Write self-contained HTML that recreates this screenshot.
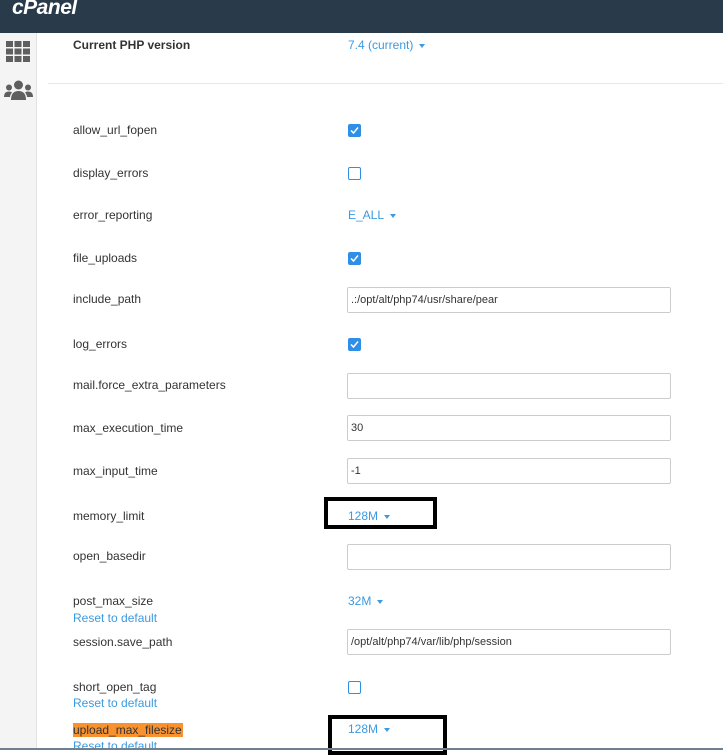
<!DOCTYPE html>
<html><head><meta charset="utf-8"><style>
*{margin:0;padding:0;box-sizing:border-box}
body{width:723px;height:750px;overflow:hidden;background:#fff;font-family:"Liberation Sans",sans-serif;font-size:12px;color:#333;position:relative}
.hdr{position:absolute;left:0;top:0;width:723px;height:33px;background:#293a4a}
.logo{position:absolute;left:12px;top:-3px;color:#fff;font-size:21px;font-weight:bold;font-style:italic;letter-spacing:-0.5px;line-height:22px}
.side{position:absolute;left:0;top:33px;width:37px;height:717px;background:#f4f4f4;border-right:1px solid #e2e2e2}
.a{position:absolute}
.lbl{position:absolute;left:73px;line-height:14px}
.lnk{position:absolute;left:73px;color:#3b9ae1;line-height:14px}
.sel{position:absolute;left:348px;color:#3b9ae1;line-height:14px}
.sel:after{content:"";display:inline-block;margin-left:6px;vertical-align:middle;border-left:3.5px solid transparent;border-right:3.5px solid transparent;border-top:4px solid #3b9ae1}
.inp{position:absolute;left:347px;width:324px;height:26px;border:1px solid #ccc;border-radius:2px;padding:0 3px;line-height:24px;font-size:11px}
.cb{position:absolute;left:348px;width:13px;height:13px;border-radius:2px}
.on{background:#2f8ee6}
.off{border:1.5px solid #2f8ee6}
.on svg{position:absolute;left:2px;top:2px}
.box{position:absolute;border:4px solid #000}
</style></head><body>
<div class="hdr"><div class="logo">cPanel</div></div>
<div class="side">
<svg class="a" style="left:6px;top:8px" width="24" height="21" viewBox="0 0 24 21" fill="#5f5f5f"><rect x="0" y="0" width="7" height="6"/><rect x="8.5" y="0" width="7" height="6"/><rect x="17" y="0" width="7" height="6"/><rect x="0" y="7.5" width="7" height="6"/><rect x="8.5" y="7.5" width="7" height="6"/><rect x="17" y="7.5" width="7" height="6"/><rect x="0" y="15" width="7" height="6"/><rect x="8.5" y="15" width="7" height="6"/><rect x="17" y="15" width="7" height="6"/></svg>
<svg class="a" style="left:4px;top:47px" width="29" height="21" viewBox="0 0 29 21" fill="#5f5f5f"><circle cx="14.5" cy="5" r="4.5"/><circle cx="5" cy="7.5" r="3"/><circle cx="24" cy="7.5" r="3"/><path d="M7 20 Q7 11 14.5 11 Q22 11 22 20Z"/><path d="M0 17 Q0 11.5 5 11.5 Q7 11.5 8 12.5 Q6 15 6 17Z"/><path d="M29 17 Q29 11.5 24 11.5 Q22 11.5 21 12.5 Q23 15 23 17Z"/></svg>
</div>
<div class="lbl" style="top:38px;font-weight:bold;color:#333">Current PHP version</div>
<div class="sel" style="top:38px">7.4 (current)</div>
<div class="a" style="left:48px;top:83px;width:675px;height:1px;background:#e8e8e8"></div>

<div class="lbl" style="top:123px">allow_url_fopen</div>
<div class="cb on" style="top:124px"><svg width="9" height="9" viewBox="0 0 9 9"><path d="M1 4.5 L3.5 7 L8 1.5" stroke="#fff" stroke-width="1.5" fill="none"/></svg></div>
<div class="lbl" style="top:166px">display_errors</div>
<div class="cb off" style="top:167px"></div>
<div class="lbl" style="top:208px">error_reporting</div>
<div class="sel" style="top:208px">E_ALL</div>
<div class="lbl" style="top:251px">file_uploads</div>
<div class="cb on" style="top:252px"><svg width="9" height="9" viewBox="0 0 9 9"><path d="M1 4.5 L3.5 7 L8 1.5" stroke="#fff" stroke-width="1.5" fill="none"/></svg></div>
<div class="lbl" style="top:292px">include_path</div>
<div class="inp" style="top:287px">.:/opt/alt/php74/usr/share/pear</div>
<div class="lbl" style="top:337px">log_errors</div>
<div class="cb on" style="top:338px"><svg width="9" height="9" viewBox="0 0 9 9"><path d="M1 4.5 L3.5 7 L8 1.5" stroke="#fff" stroke-width="1.5" fill="none"/></svg></div>
<div class="lbl" style="top:378px">mail.force_extra_parameters</div>
<div class="inp" style="top:373px"></div>
<div class="lbl" style="top:421px">max_execution_time</div>
<div class="inp" style="top:415px">30</div>
<div class="lbl" style="top:464px">max_input_time</div>
<div class="inp" style="top:458px">-1</div>
<div class="lbl" style="top:509px">memory_limit</div>
<div class="sel" style="top:509px">128M</div>
<div class="box" style="left:324px;top:497px;width:113px;height:32px"></div>
<div class="lbl" style="top:549px">open_basedir</div>
<div class="inp" style="top:544px"></div>
<div class="lbl" style="top:594px">post_max_size</div>
<div class="sel" style="top:594px">32M</div>
<div class="lnk" style="top:611px">Reset to default</div>
<div class="lbl" style="top:635px">session.save_path</div>
<div class="inp" style="top:629px">/opt/alt/php74/var/lib/php/session</div>
<div class="lbl" style="top:680px">short_open_tag</div>
<div class="cb off" style="top:681px"></div>
<div class="lnk" style="top:696px">Reset to default</div>
<div class="lbl" style="top:723px;background:#f7922f;padding-right:1px">upload_max_filesize</div>
<div class="sel" style="top:722px">128M</div>
<div class="lnk" style="top:739px">Reset to default</div>
<div class="box" style="left:328px;top:715px;width:119px;height:40px"></div>
<div class="a" style="left:0;top:748px;width:723px;height:2px;background:#6f8090"></div>
</body></html>
